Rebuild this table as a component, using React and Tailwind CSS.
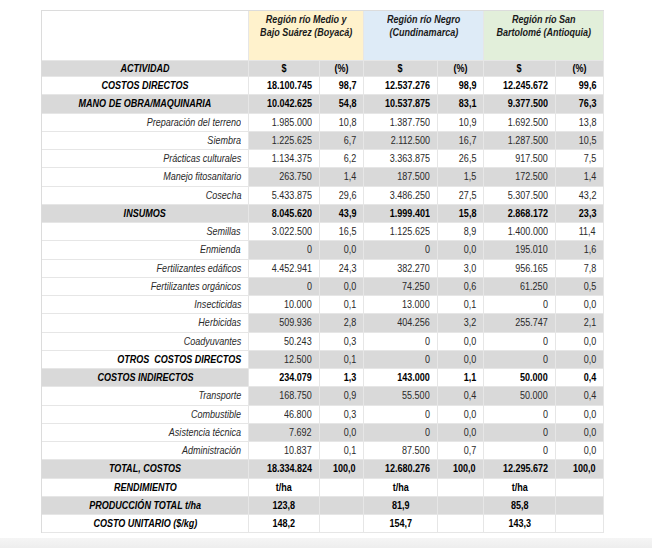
import React from "react";

const rows = [
  { label: "COSTOS DIRECTOS", kind: "major", lg: false, dg: false, v: ["18.100.745", "98,7", "12.537.276", "98,9", "12.245.672", "99,6"] },
  { label: "MANO DE OBRA/MAQUINARIA", kind: "major", lg: true, dg: true, v: ["10.042.625", "54,8", "10.537.875", "83,1", "9.377.500", "76,3"] },
  { label: "Preparación del terreno", kind: "detail", lg: false, dg: false, v: ["1.985.000", "10,8", "1.387.750", "10,9", "1.692.500", "13,8"] },
  { label: "Siembra", kind: "detail", lg: false, dg: true, v: ["1.225.625", "6,7", "2.112.500", "16,7", "1.287.500", "10,5"] },
  { label: "Prácticas culturales", kind: "detail", lg: false, dg: false, v: ["1.134.375", "6,2", "3.363.875", "26,5", "917.500", "7,5"] },
  { label: "Manejo fitosanitario", kind: "detail", lg: false, dg: true, v: ["263.750", "1,4", "187.500", "1,5", "172.500", "1,4"] },
  { label: "Cosecha", kind: "detail", lg: false, dg: false, v: ["5.433.875", "29,6", "3.486.250", "27,5", "5.307.500", "43,2"] },
  { label: "INSUMOS", kind: "major", lg: true, dg: true, v: ["8.045.620", "43,9", "1.999.401", "15,8", "2.868.172", "23,3"] },
  { label: "Semillas", kind: "detail", lg: false, dg: false, v: ["3.022.500", "16,5", "1.125.625", "8,9", "1.400.000", "11,4"] },
  { label: "Enmienda", kind: "detail", lg: false, dg: true, v: ["0", "0,0", "0", "0,0", "195.010", "1,6"] },
  { label: "Fertilizantes edáficos", kind: "detail", lg: false, dg: false, v: ["4.452.941", "24,3", "382.270", "3,0", "956.165", "7,8"] },
  { label: "Fertilizantes orgánicos", kind: "detail", lg: false, dg: true, v: ["0", "0,0", "74.250", "0,6", "61.250", "0,5"] },
  { label: "Insecticidas", kind: "detail", lg: false, dg: false, v: ["10.000", "0,1", "13.000", "0,1", "0", "0,0"] },
  { label: "Herbicidas", kind: "detail", lg: false, dg: true, v: ["509.936", "2,8", "404.256", "3,2", "255.747", "2,1"] },
  { label: "Coadyuvantes", kind: "detail", lg: false, dg: false, v: ["50.243", "0,3", "0", "0,0", "0", "0,0"] },
  { label: "OTROS  COSTOS DIRECTOS", kind: "otros", lg: false, dg: true, v: ["12.500", "0,1", "0", "0,0", "0", "0,0"] },
  { label: "COSTOS INDIRECTOS", kind: "major", lg: true, dg: false, v: ["234.079", "1,3", "143.000", "1,1", "50.000", "0,4"] },
  { label: "Transporte", kind: "detail", lg: false, dg: true, v: ["168.750", "0,9", "55.500", "0,4", "50.000", "0,4"] },
  { label: "Combustible", kind: "detail", lg: false, dg: false, v: ["46.800", "0,3", "0", "0,0", "0", "0,0"] },
  { label: "Asistencia técnica", kind: "detail", lg: false, dg: true, v: ["7.692", "0,0", "0", "0,0", "0", "0,0"] },
  { label: "Administración", kind: "detail", lg: false, dg: false, v: ["10.837", "0,1", "87.500", "0,7", "0", "0,0"] },
  { label: "TOTAL, COSTOS", kind: "major", lg: true, dg: true, v: ["18.334.824", "100,0", "12.680.276", "100,0", "12.295.672", "100,0"] },
  { label: "RENDIMIENTO", kind: "result", lg: false, dg: false, v: ["t/ha", "", "t/ha", "", "t/ha", ""] },
  { label: "PRODUCCIÓN TOTAL t/ha", kind: "result", lg: true, dg: true, v: ["123,8", "", "81,9", "", "85,8", ""] },
  { label: "COSTO UNITARIO ($/kg)", kind: "result", lg: false, dg: false, v: ["148,2", "", "154,7", "", "143,3", ""] },
];

function Cell({ gray, align, bold, italic, h, children }) {
  const center = align === "center";
  return (
    <div
      className={`${h} flex items-center ${center ? "justify-center" : "justify-end pr-[7px]"} border-r border-b border-[#e6e6e6] whitespace-pre ${gray ? "bg-[#d9d9d9]" : "bg-white"} ${bold ? "font-bold text-black" : "font-normal text-[#2a2a2a]"} ${italic ? "italic" : "not-italic"}`}
    >
      <span className={`inline-block scale-x-[0.82] ${center ? "origin-center" : "origin-right"}`}>{children}</span>
    </div>
  );
}

function HeadLine({ children }) {
  return <span className="inline-block scale-x-[0.82] origin-center whitespace-pre">{children}</span>;
}

export default function App() {
  return (
    <div className="w-[652px] h-[548px] bg-white overflow-hidden font-['Liberation_Sans',Arial,sans-serif] text-[11px] leading-[13px]">
      <div className="pt-[10px] pl-[41px]">
        <div className="grid grid-cols-[207px_71px_44px_74px_46px_72px_48px] border-l border-t border-[#dcdcdc] w-[563px]">
          <div className="h-[50px] border-r border-b border-[#e6e6e6] bg-white"></div>
          <div className="col-span-2 h-[50px] border-r border-b border-[#e6e6e6] bg-[#fff2cc] flex flex-col items-center pt-[2px] font-bold italic text-[#1a1a1a]">
            <HeadLine>Región río Medio y</HeadLine>
            <HeadLine>Bajo Suárez (Boyacá)</HeadLine>
          </div>
          <div className="col-span-2 h-[50px] border-r border-b border-[#e6e6e6] bg-[#deebf7] flex flex-col items-center pt-[2px] font-bold italic text-[#1a1a1a]">
            <HeadLine>Región río Negro</HeadLine>
            <HeadLine>(Cundinamarca)</HeadLine>
          </div>
          <div className="col-span-2 h-[50px] border-r border-b border-[#e6e6e6] bg-[#e2efda] flex flex-col items-center pt-[2px] font-bold italic text-[#1a1a1a]">
            <HeadLine>Región río San</HeadLine>
            <HeadLine>Bartolomé (Antioquia)</HeadLine>
          </div>

          <Cell gray align="center" bold italic h="h-[16px]">ACTIVIDAD</Cell>
          {["$", "(%)", "$", "(%)", "$", "(%)"].map((t, i) => (
            <Cell key={i} gray align="center" bold h="h-[16px]">{t}</Cell>
          ))}

          {rows.map((r, ri) => {
            const labelAlign = r.kind === "major" || r.kind === "result" ? "center" : "right";
            const labelBold = r.kind !== "detail";
            const dataBold = r.kind === "major" || r.kind === "result";
            const dataAlign = r.kind === "result" ? "center" : "right";
            return (
              <React.Fragment key={ri}>
                <Cell gray={r.lg} align={labelAlign} bold={labelBold} italic h="h-[18.25px]">{r.label}</Cell>
                {r.v.map((t, i) => (
                  <Cell key={i} gray={r.dg} align={dataAlign} bold={dataBold} h="h-[18.25px]">{t}</Cell>
                ))}
              </React.Fragment>
            );
          })}
        </div>
      </div>
      <div className="mt-[5px] h-[12px] bg-linear-to-b from-[#f5f5f5] to-[#ececec]"></div>
    </div>
  );
}
